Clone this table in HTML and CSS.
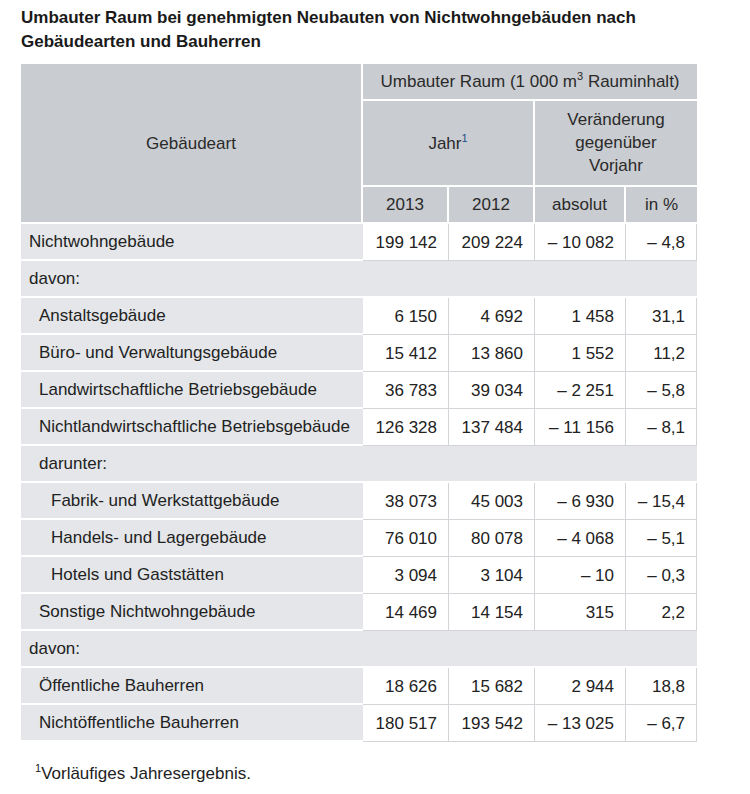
FILE: index.html
```html
<!DOCTYPE html>
<html lang="de">
<head>
<meta charset="utf-8">
<title>Umbauter Raum</title>
<link rel="stylesheet" href="styles.css">
</head>
<body>
<h1 class="title">Umbauter Raum bei genehmigten Neubauten von Nichtwohngebäuden nach Gebäudearten und Bauherren</h1>
<table class="data">
  <colgroup>
    <col class="c-label"><col class="c-num"><col class="c-num"><col class="c-abs"><col class="c-pct">
  </colgroup>
  <thead>
    <tr>
      <th rowspan="3" class="h-main">Gebäudeart</th>
      <th colspan="4" class="h-last">Umbauter Raum (1 000 m<sup>3</sup> Rauminhalt)</th>
    </tr>
    <tr>
      <th colspan="2">Jahr<sup class="fn">1</sup></th>
      <th colspan="2" class="h-last h-tall">Veränderung<br>gegenüber<br>Vorjahr</th>
    </tr>
    <tr>
      <th>2013</th><th>2012</th><th>absolut</th><th class="h-last">in %</th>
    </tr>
  </thead>
  <tbody>
    <tr><td class="lbl">Nichtwohngebäude</td><td class="num">199 142</td><td class="num">209 224</td><td class="num">– 10 082</td><td class="num">– 4,8</td></tr>
    <tr><td class="lbl sect" colspan="5">davon:</td></tr>
    <tr><td class="lbl l1">Anstaltsgebäude</td><td class="num">6 150</td><td class="num">4 692</td><td class="num">1 458</td><td class="num">31,1</td></tr>
    <tr><td class="lbl l1">Büro- und Verwaltungsgebäude</td><td class="num">15 412</td><td class="num">13 860</td><td class="num">1 552</td><td class="num">11,2</td></tr>
    <tr><td class="lbl l1">Landwirtschaftliche Betriebsgebäude</td><td class="num">36 783</td><td class="num">39 034</td><td class="num">– 2 251</td><td class="num">– 5,8</td></tr>
    <tr><td class="lbl l1">Nichtlandwirtschaftliche Betriebsgebäude</td><td class="num">126 328</td><td class="num">137 484</td><td class="num">– 11 156</td><td class="num">– 8,1</td></tr>
    <tr><td class="lbl sect l1" colspan="5">darunter:</td></tr>
    <tr><td class="lbl l2">Fabrik- und Werkstattgebäude</td><td class="num">38 073</td><td class="num">45 003</td><td class="num">– 6 930</td><td class="num">– 15,4</td></tr>
    <tr><td class="lbl l2">Handels- und Lagergebäude</td><td class="num">76 010</td><td class="num">80 078</td><td class="num">– 4 068</td><td class="num">– 5,1</td></tr>
    <tr><td class="lbl l2">Hotels und Gaststätten</td><td class="num">3 094</td><td class="num">3 104</td><td class="num">– 10</td><td class="num">– 0,3</td></tr>
    <tr><td class="lbl l1">Sonstige Nichtwohngebäude</td><td class="num">14 469</td><td class="num">14 154</td><td class="num">315</td><td class="num">2,2</td></tr>
    <tr><td class="lbl sect" colspan="5">davon:</td></tr>
    <tr><td class="lbl l1">Öffentliche Bauherren</td><td class="num">18 626</td><td class="num">15 682</td><td class="num">2 944</td><td class="num">18,8</td></tr>
    <tr><td class="lbl l1">Nichtöffentliche Bauherren</td><td class="num">180 517</td><td class="num">193 542</td><td class="num">– 13 025</td><td class="num">– 6,7</td></tr>
  </tbody>
</table>
<p class="footnote"><sup>1</sup>Vorläufiges Jahresergebnis.</p>
</body>
</html>
```

FILE: styles.css
```css
html, body {
  margin: 0;
  background: #fff;
}
body {
  padding: 6px 21px 0 21px;
  font-family: "Liberation Sans", Arial, Helvetica, sans-serif;
  color: #222;
  font-size: 17px;
}
.title {
  margin: 0 0 10px 0;
  font-size: 17px;
  font-weight: bold;
  line-height: 24px;
  color: #1a1a1a;
  width: 640px;
}
.data {
  border-collapse: separate;
  border-spacing: 0;
  table-layout: fixed;
  width: 676px;
}
.c-label { width: 342px; }
.c-num { width: 86px; }
.c-abs { width: 91px; }
.c-pct { width: 71px; }

.data th {
  background: #c9ccd0;
  color: #2a2a2a;
  font-weight: normal;
  text-align: center;
  vertical-align: middle;
  line-height: 21px;
  padding: 7px 4px;
  border-right: 2px solid #fff;
  border-bottom: 2px solid #fff;
}
.data th.h-last { border-right: 0; }
.data th.h-tall {
  line-height: 23px;
  padding: 7px 4px 8px;
}
.data sup {
  font-size: 11px;
  line-height: 0;
  vertical-align: 7px;
}
.data sup.fn { color: #1d4f8c; }

.data td {
  line-height: 21px;
  padding: 7px 11px 7px 8px;
  white-space: nowrap;
}
.data td.lbl {
  background: #e4e6e9;
  border-bottom: 2px solid #fff;
  text-align: left;
}
.data td.l1 { padding-left: 18px; }
.data td.l2 { padding-left: 30px; }
.data td.num {
  background: #fff;
  text-align: right;
  border-right: 1px solid #d2d4d7;
  border-bottom: 1px solid #d2d4d7;
}
.footnote {
  margin: 20px 0 0 14px;
  line-height: 24px;
  font-size: 17px;
  color: #222;
}
.footnote sup {
  font-size: 11px;
  line-height: 0;
  vertical-align: 7px;
}
```
